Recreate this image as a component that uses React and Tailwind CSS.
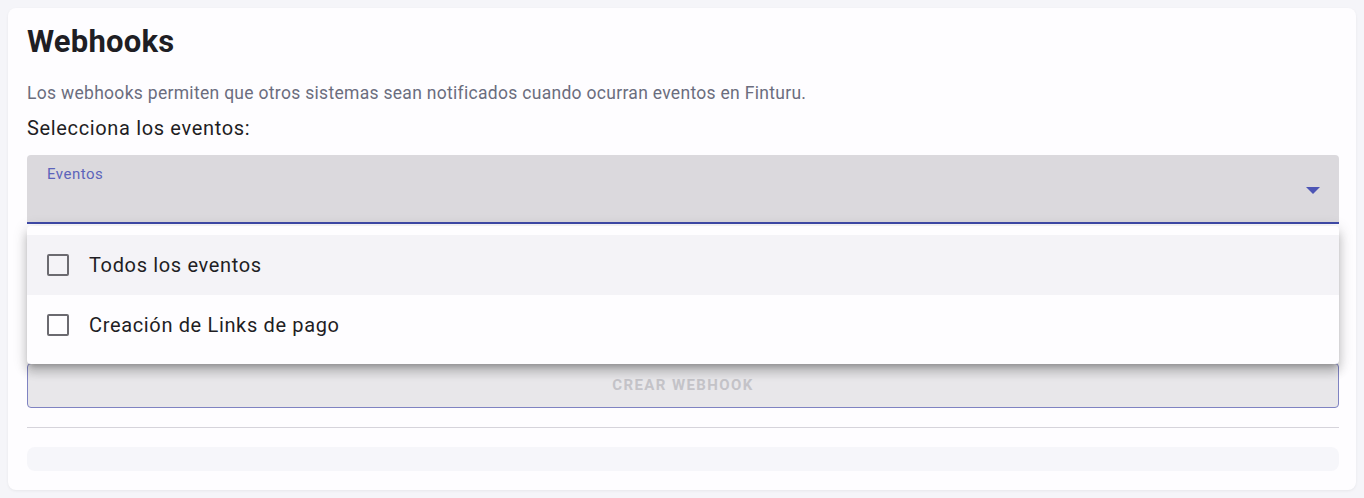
import React from 'react';

// ===== CHECKBOX ROW =====
const Option = ({ label, active = false }) => (
  <div className={`h-[60px] flex items-center pl-5 gap-5 ${active ? 'bg-[#f4f3f7]' : ''}`}>
    <span className="w-[22px] h-[22px] border-2 border-[#6b6a70] rounded-[2px] shrink-0" />
    <span className="text-[20px] text-[#1f1e24] tracking-[0.65px]">{label}</span>
  </div>
);

export default function App() {
  return (
    <div className="min-h-[498px] bg-[#f5f5f9] p-2 font-['Roboto',sans-serif]">
      <div className="relative bg-[#fefdff] rounded-lg pl-[19px] pr-[17px] pt-[22px] pb-[19px] shadow-[0_1px_3px_rgba(0,0,0,0.06)]">
        <h1 className="text-[31px] leading-[24px] font-bold text-[#1f1e24] tracking-[0.2px]">Webhooks</h1>

        <p className="mt-[28px] text-[17.5px] leading-[22px] text-[#6b6d7e] tracking-[0.3px]">
          Los webhooks permiten que otros sistemas sean notificados cuando ocurran eventos en Finturu.
        </p>
        <p className="mt-[12px] text-[20px] leading-[24px] text-[#1f1e24] tracking-[0.65px]">Selecciona los eventos:</p>

        {/* select field */}
        <div className="mt-[15px] h-[69px] bg-[#dbd9dd] rounded-t border-b-2 border-[#3f4aa8] relative">
          <span className="absolute left-5 top-[8px] text-[15px] text-[#5c64bb] tracking-[0.5px]">Eventos</span>
          <svg className="absolute right-[19px] top-[32px]" width="14" height="7" viewBox="0 0 14 7">
            <path d="M0 0 L14 0 L7 7 Z" fill="#4d55b5" />
          </svg>
        </div>

        {/* hidden field behind the menu */}
        <div className="h-[139px]" />

        <button className="w-full h-[45px] bg-[#e8e7ea] border border-[#7f83c2] rounded flex items-center justify-center text-[15px] font-bold tracking-[1.4px] text-[#c4c3c8]">
          CREAR WEBHOOK
        </button>

        <div className="mt-[19px] h-px bg-[#d6d4db]" />

        <div className="mt-[19px] h-[24px] rounded-lg bg-[#f6f6fa]" />

        {/* open dropdown menu */}
        <div className="absolute left-[19px] right-[17px] top-[218px] bg-[#fefdff] rounded py-[9px] shadow-[0px_5px_5px_-3px_rgba(0,0,0,0.2),0px_8px_10px_1px_rgba(0,0,0,0.14),0px_3px_14px_2px_rgba(0,0,0,0.12)]">
          <Option label="Todos los eventos" active />
          <Option label="Creación de Links de pago" />
        </div>
      </div>
    </div>
  );
}
